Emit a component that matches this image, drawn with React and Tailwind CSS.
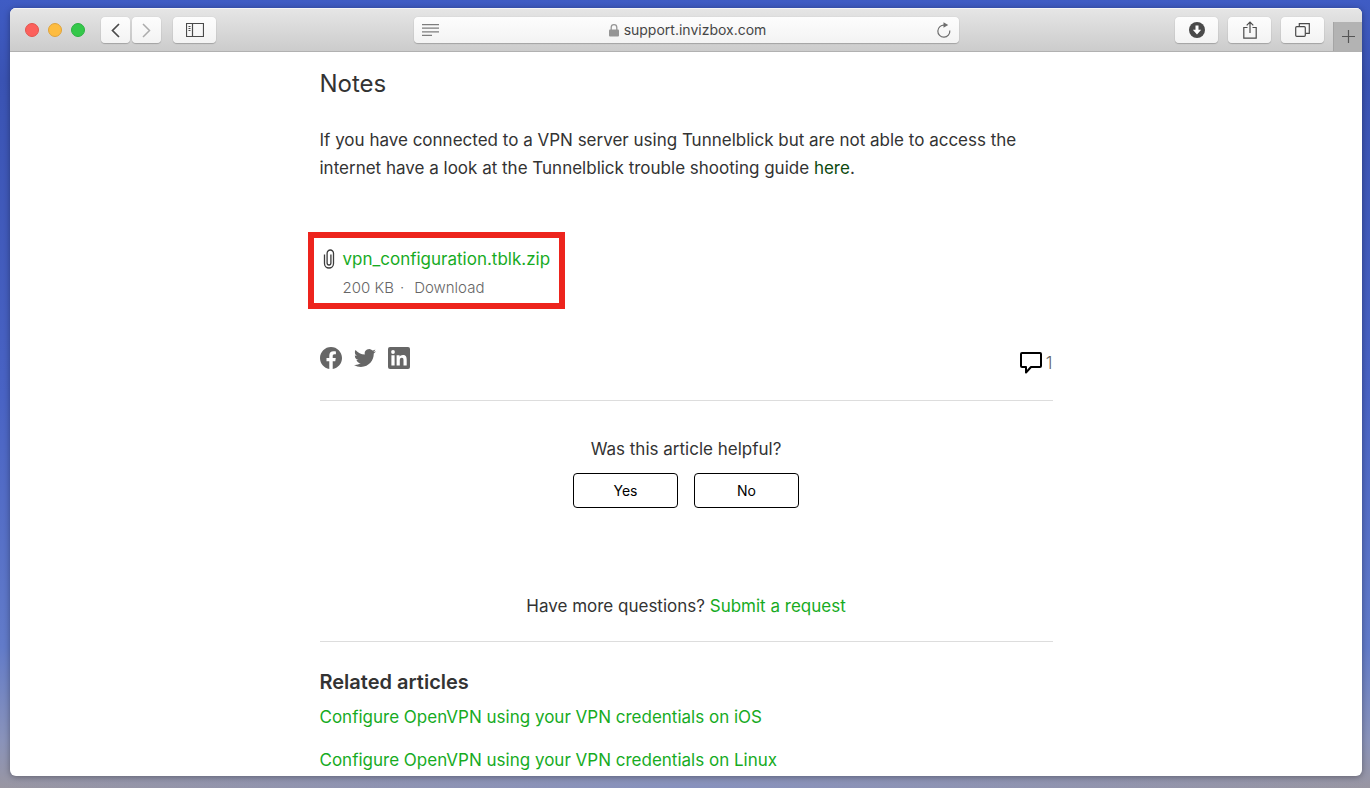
import React from "react";

const relatedArticles = [
  "Configure OpenVPN using your VPN credentials on iOS",
  "Configure OpenVPN using your VPN credentials on Linux",
];

const ToolbarButton = ({ label, className, children }) => (
  <button
    type="button"
    aria-label={label}
    className={`flex h-[26px] items-center justify-center rounded bg-linear-to-b from-[#fdfdfd] to-[#f3f3f3] text-[#4a4a4a] shadow-[0_1px_1px_rgba(0,0,0,0.2),0_0_1px_rgba(0,0,0,0.2)] ${className}`}
  >
    {children}
  </button>
);

const Toolbar = () => (
  <header className="flex h-11 items-start justify-between border-b border-[#b1b1b1] bg-linear-to-b from-[#e6e6e6] to-[#cccccc] shadow-[inset_0_1px_0_#f5f5f5]">
    <div className="flex flex-1 items-center pt-[9px]">
      <div className="flex gap-[9px] pl-[15px]">
        <span className="size-[14px] rounded-full border border-[#e2544d] bg-[#fc605c]" />
        <span className="size-[14px] rounded-full border border-[#dfa33a] bg-[#fdbc40]" />
        <span className="size-[14px] rounded-full border border-[#2bb141] bg-[#34c84a]" />
      </div>
      <div className="ml-4 flex gap-[2px]">
        <ToolbarButton label="Back" className="w-[29px]">
          <svg width="9" height="15" viewBox="0 0 9 15" fill="none" stroke="currentColor" strokeWidth="1.7">
            <path d="M8 1 1.5 7.5 8 14" />
          </svg>
        </ToolbarButton>
        <ToolbarButton label="Forward" className="w-[29px]">
          <svg width="9" height="15" viewBox="0 0 9 15" fill="none" stroke="#acacac" strokeWidth="1.5">
            <path d="M1 1 7.5 7.5 1 14" />
          </svg>
        </ToolbarButton>
      </div>
      <ToolbarButton label="Show sidebar" className="ml-3 w-[43px]">
        <svg width="18" height="14" viewBox="0 0 18 14" fill="none" stroke="currentColor">
          <path d="M.5.5h17v13H.5zM6.500 .5v13" strokeWidth="1.2" />
          <path d="M2.500 3.500h2M2.500 5.500h2M2.500 7.500h2" />
        </svg>
      </ToolbarButton>
    </div>

    <div className="mt-[9px] flex h-[26px] w-full max-w-[545px] items-center justify-between rounded bg-linear-to-b from-[#fdfdfd] to-[#f3f3f3] px-2 shadow-[0_1px_1px_rgba(0,0,0,0.2),0_0_1px_rgba(0,0,0,0.2)]">
      <svg width="17" height="12" viewBox="0 0 17 12" fill="none" stroke="#7d7d7d" strokeWidth="1.2">
        <path d="M0 .6h17M0 4.200h17M0 7.800h17M0 11.400h10" />
      </svg>
      <div className="flex items-center gap-[5px] text-sm text-[#464646]">
        <svg width="10" height="13" viewBox="0 0 10 13">
          <rect y="5.500" width="10" height="7" rx="1" fill="#959595" />
          <path d="M2.200 6V3.500a2.800 2.800 0 0 1 5.600 0V6" fill="none" stroke="#959595" strokeWidth="1.300" />
        </svg>
        <span>support.invizbox.com</span>
      </div>
      <button type="button" aria-label="Reload">
        <svg width="14" height="16" viewBox="0 0 14 16">
          <path d="M12.800 8.500A6 6 0 1 1 7.500 3.200" fill="none" stroke="#6e6e6e" strokeWidth="1.200" />
          <path d="M6.500.2 11.200 3 6.500 5.800z" fill="#6e6e6e" />
        </svg>
      </button>
    </div>

    <div className="flex flex-1 items-start justify-end">
      <div className="mr-[9px] flex gap-[10px] pt-[9px]">
        <ToolbarButton label="Downloads" className="w-[43px]">
          <svg width="16" height="16" viewBox="0 0 16 16">
            <circle cx="8" cy="8" r="8" fill="currentColor" />
            <path d="M6.500 3.500h3v4.300h2.700L8 12.400 3.800 7.800h2.700z" fill="#fff" />
          </svg>
        </ToolbarButton>
        <ToolbarButton label="Share" className="w-[43px]">
          <svg width="14" height="18" viewBox="0 0 14 18" fill="none" stroke="currentColor" strokeWidth="1.200">
            <path d="M4.500 6.500H.8v10.700h12.400V6.500H9.500M7 12V1.200M3.700 4.400 7 1l3.300 3.400" />
          </svg>
        </ToolbarButton>
        <ToolbarButton label="Show all tabs" className="w-[43px]">
          <svg width="15" height="14" viewBox="0 0 15 14" fill="none" stroke="currentColor" strokeWidth="1.200">
            <rect x=".7" y="3.700" width="9.600" height="9.600" rx="1" />
            <path d="M4.300 3.500V.7h10v9.600h-3.800" />
          </svg>
        </ToolbarButton>
      </div>
      <button
        type="button"
        aria-label="New tab"
        className="mt-[14px] flex h-[29px] w-[29px] items-center justify-center border-l border-[#a5a5a5] bg-[#b3b3b3]"
      >
        <svg width="13" height="13" viewBox="0 0 13 13" stroke="#555" strokeWidth="1.200">
          <path d="M6.500 0v13M0 6.500h13" />
        </svg>
      </button>
    </div>
  </header>
);

const Attachment = () => (
  <div className="-ml-3 mt-[50px] flex w-fit gap-2 border-6 border-[#ed241d] pt-[7px] pr-[9px] pb-[3px] pl-[9px]">
    <svg className="mt-1 w-3" height="20" viewBox="0 0 12 20" fill="none" stroke="#3c3c3c" strokeWidth="1.300">
      <path d="M1.500 5.500v9a4.500 4.500 0 0 0 9 0V4.200a3.200 3.200 0 0 0-6.400 0v9.900a1.900 1.900 0 0 0 3.800 0V5.500" />
    </svg>
    <div>
      <a href="#vpn-configuration" className="block text-[#17ab1f]">
        vpn_configuration.tblk.zip
      </a>
      <div className="mt-[3px] flex gap-[6px] text-[15px] leading-6 font-light text-[#666]">
        <span>200 KB</span>
        <span>·</span>
        <a href="#download" className="ml-1">
          Download
        </a>
      </div>
    </div>
  </div>
);

const ShareRow = () => (
  <div className="mt-9 flex items-start justify-between border-b border-[#ddd] pb-[25px]">
    <div className="flex gap-3 pt-[2px]">
      <a href="#facebook" aria-label="Facebook">
        <svg width="22" height="22" viewBox="0 0 24 24" fill="#666">
          <path d="M24 12.070C24 5.400 18.630 0 12 0S0 5.400 0 12.070c0 6.030 4.390 11.020 10.130 11.930v-8.440H7.080v-3.490h3.050V9.410c0-3.030 1.790-4.700 4.530-4.700 1.310 0 2.690.24 2.690.24v2.970h-1.520c-1.490 0-1.960.93-1.960 1.890v2.260h3.330l-.53 3.490h-2.800V24C19.610 23.090 24 18.100 24 12.070z" />
        </svg>
      </a>
      <a href="#twitter" aria-label="Twitter">
        <svg width="22" height="22" viewBox="0 0 24 24" fill="#666">
          <path d="M23.950 4.570a10 10 0 0 1-2.820.77 4.960 4.960 0 0 0 2.160-2.720c-.95.55-2 .95-3.130 1.180a4.920 4.920 0 0 0-8.380 4.480C7.690 8.090 4.070 6.130 1.640 3.160a4.820 4.820 0 0 0-.67 2.480c0 1.710.87 3.210 2.190 4.100a4.900 4.900 0 0 1-2.230-.62v.06a4.920 4.920 0 0 0 3.950 4.830 5 5 0 0 1-2.210.09 4.940 4.940 0 0 0 4.600 3.420A9.870 9.870 0 0 1 0 19.540a14 14 0 0 0 7.550 2.210c9.050 0 14-7.500 14-13.980 0-.21 0-.42-.02-.63a9.940 9.940 0 0 0 2.460-2.550z" />
        </svg>
      </a>
      <a href="#linkedin" aria-label="LinkedIn">
        <svg width="22" height="22" viewBox="0 0 22 22">
          <rect width="22" height="22" rx="2" fill="#666" />
          <circle cx="5" cy="5" r="1.900" fill="#fff" />
          <path d="M3.400 8.300h3.200v10.300H3.400zM8.600 8.300h3v1.400c.5-.9 1.600-1.700 3.200-1.700 3.200 0 3.900 2 3.900 4.800v5.800h-3.200v-5.200c0-1.300-.1-2.700-1.700-2.700-1.700 0-2 1.300-2 2.600v5.300H8.600z" fill="#fff" />
        </svg>
      </a>
    </div>
    <a href="#comments" aria-label="1 comment" className="flex items-center gap-1 pt-[6px] font-light text-[#666]">
      <svg width="22" height="22" viewBox="0 0 22 22" fill="none" stroke="#000" strokeWidth="2" strokeLinejoin="round">
        <path d="M2 1h18a1 1 0 0 1 1 1v12a1 1 0 0 1-1 1h-9l-5 5.500V15H2a1 1 0 0 1-1-1V2a1 1 0 0 1 1-1z" />
      </svg>
      <span className="leading-6">1</span>
    </a>
  </div>
);

const App = () => {
  return (
    <div className="flex min-h-screen bg-[radial-gradient(ellipse_50%_60px_at_50%_100%,#8791bd,transparent),linear-gradient(#3f5cc4,#3a53b3_10%,#4963c4_50%,#627bc9_82%,#8a93ba_94%,#9996a2)] pt-2 pr-2 pb-3 pl-[10px] font-['Inter','Liberation_Sans',sans-serif]">
      <div className="flex-1 overflow-hidden rounded-md bg-white shadow-[0_1px_6px_rgba(0,0,0,0.35)]">
        <Toolbar />
        <main className="mx-auto w-full max-w-[733px] pt-4 text-[17px] leading-7 text-[#333]">
          <h2 className="text-2xl leading-8">Notes</h2>
          <p className="mt-[26px]">
            If you have connected to a VPN server using Tunnelblick but are not able to access the internet
            have a look at the Tunnelblick trouble shooting guide{" "}
            <a href="#troubleshooting" className="text-[#0c4a0f]">
              here
            </a>
            .
          </p>

          <Attachment />
          <ShareRow />

          <section className="pt-[34px] text-center">
            <p>Was this article helpful?</p>
            <div className="mt-[10px] flex justify-center gap-4 text-sm text-black">
              <button type="button" className="h-[35px] w-[105px] rounded border border-black">
                Yes
              </button>
              <button type="button" className="h-[35px] w-[105px] rounded border border-black">
                No
              </button>
            </div>
          </section>

          <p className="mt-[84px] border-b border-[#ddd] pb-[21px] text-center">
            Have more questions?{" "}
            <a href="#request" className="text-[#17ab1f]">
              Submit a request
            </a>
          </p>

          <section className="pt-[26px]">
            <h3 className="text-xl leading-7 font-semibold">Related articles</h3>
            <ul className="mt-[7px] flex flex-col gap-[15px]">
              {relatedArticles.map((title) => (
                <li key={title}>
                  <a href="#article" className="text-[#17ab1f]">
                    {title}
                  </a>
                </li>
              ))}
            </ul>
          </section>
        </main>
      </div>
    </div>
  );
};

export default App;
